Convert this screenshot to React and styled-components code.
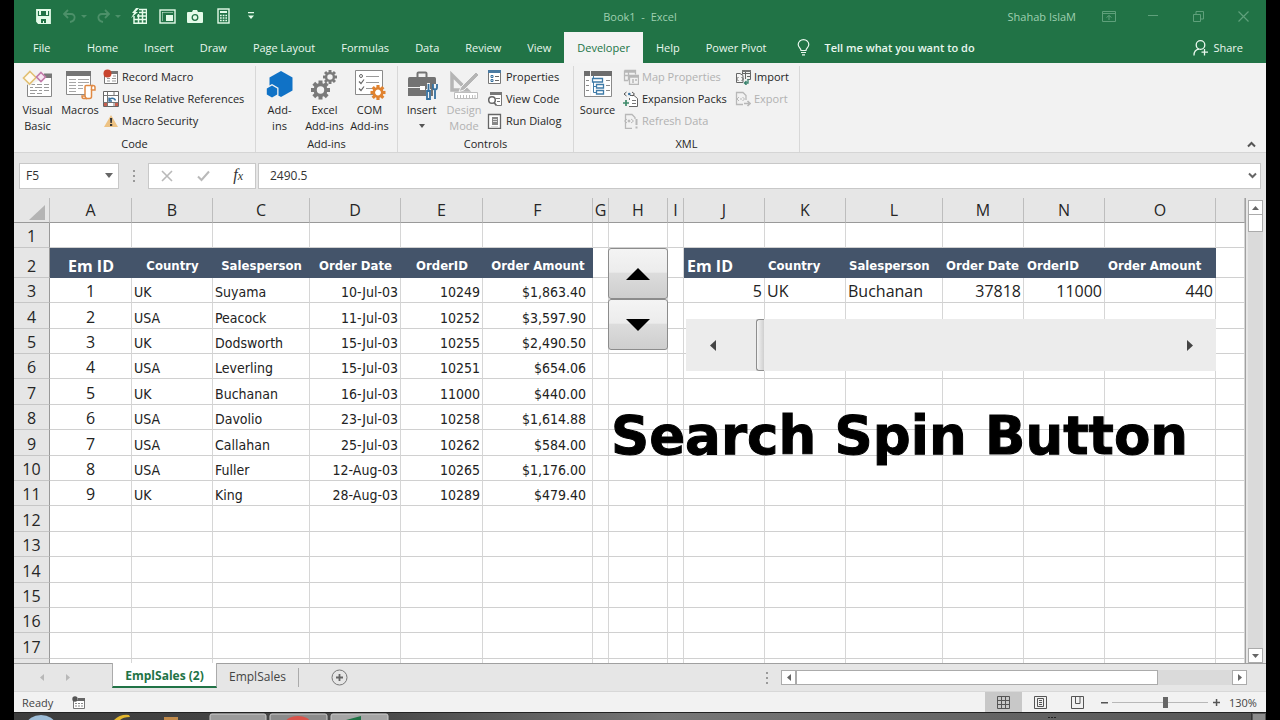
import styled, { createGlobalStyle, css } from 'styled-components';

const GlobalStyle = createGlobalStyle`
  * {
    box-sizing: border-box;
  }

  body {
    margin: 0;
    background: #000;
  }

  button {
    border: 0;
    padding: 0;
    background: none;
    font: inherit;
    color: inherit;
  }

  svg {
    display: block;
    flex: none;
  }
`;

const Window = styled.div`
  display: flex;
  flex-direction: column;
  height: 100vh;
  margin: 0 14px;
  background: #e6e6e6;
  font-family: 'Open Sans', 'Noto Sans', sans-serif;
  font-size: 11px;
  color: #262626;
  overflow: hidden;
`;

/* title bar */

const TitleBar = styled.header`
  display: grid;
  grid-template-columns: 1fr auto 1fr;
  align-items: center;
  height: 32px;
  flex: none;
  background: #217346;
  color: #9fd0b0;
`;

const QuickAccess = styled.div`
  display: flex;
  padding-left: 15px;
`;

const QuickButton = styled.button`
  display: flex;
  align-items: center;
  justify-content: center;
  gap: 4px;
  width: ${(p) => (p.$split ? 34 : 28)}px;
  height: 32px;
  color: ${(p) => (p.disabled ? '#4c9069' : '#e4fbe9')};
`;

const WindowControls = styled.div`
  display: flex;
  align-items: center;
  justify-content: flex-end;
`;

const UserName = styled.span`
  margin-right: 10px;
`;

const WindowButton = styled.button`
  display: flex;
  align-items: center;
  justify-content: center;
  width: 45px;
  height: 32px;
  color: #5fa07b;
`;

/* ribbon tabs */

const TabBar = styled.nav`
  display: flex;
  height: 31px;
  flex: none;
  background: #217346;
  color: #e9f7ee;
`;

const Tab = styled.button`
  padding: 0 13px;
  ${(p) =>
    p.$file &&
    css`
      width: 60px;
      padding: 0 0 0 19px;
      text-align: left;
    `}
  ${(p) =>
    p.$active &&
    css`
      background: #f3f3f3;
      color: #217346;
    `}
`;

const TellMe = styled.label`
  display: flex;
  align-items: center;
  gap: 14px;
  flex: 1;
  margin-left: 18px;
`;

const TellMeInput = styled.input`
  flex: 1;
  border: 0;
  padding: 0;
  outline: 0;
  background: none;
  font: inherit;
  font-weight: 600;
  color: #e9f7ee;

  &::placeholder {
    color: #e9f7ee;
    opacity: 1;
  }
`;

const ShareButton = styled.button`
  display: flex;
  align-items: center;
  gap: 4px;
  margin-right: 23px;
`;

/* ribbon */

const Ribbon = styled.section`
  position: relative;
  display: flex;
  height: 90px;
  flex: none;
  padding-top: 3px;
  background: #f2f2f2;
  border-bottom: 1px solid #d5d5d5;
`;

const Group = styled.div`
  display: flex;
  flex-direction: column;
  justify-content: space-between;
  width: ${(p) => p.$width}px;
  border-right: 1px solid #d8d8d8;
`;

const GroupBody = styled.div`
  display: flex;
  padding-left: 1px;
`;

const GroupLabel = styled.div`
  line-height: 16px;
  text-align: center;
`;

const BigButton = styled.button`
  display: flex;
  flex-direction: column;
  align-items: center;
  gap: 2px;
  width: ${(p) => (p.$narrow ? 40 : 45)}px;
  padding-top: 2px;
  line-height: 16px;
  white-space: pre;
  text-align: center;
  color: ${(p) => (p.disabled ? '#b1b1b1' : '#262626')};
`;

const DropMark = styled.span`
  display: flex;
  align-items: center;
  height: 12px;
  color: #555;
`;

const SmallColumn = styled.div`
  display: flex;
  flex-direction: column;
  margin-left: 3px;
  min-width: ${(p) => (p.$wide ? 109 : 0)}px;
`;

const SmallButton = styled.button`
  display: flex;
  align-items: center;
  gap: 3px;
  height: 22px;
  line-height: 22px;
  white-space: nowrap;
  color: ${(p) => (p.disabled ? '#b1b1b1' : '#262626')};
`;

const CollapseButton = styled.button`
  position: absolute;
  right: 10px;
  bottom: 4px;
  color: #555;
`;

/* formula bar */

const FormulaBar = styled.div`
  display: flex;
  align-items: center;
  height: 45px;
  flex: none;
  padding: 0 5px;
  color: #666;
`;

const BarBox = styled.div`
  display: flex;
  align-items: center;
  height: 26px;
  background: #fff;
  border: 1px solid #c8c8c8;
`;

const NameBox = styled(BarBox)`
  width: 100px;
  padding: 0 5px 0 6px;
`;

const Functions = styled(BarBox)`
  width: 108px;
  justify-content: space-between;
  padding: 0 12px 0 10px;
`;

const FormulaBox = styled(BarBox)`
  flex: 1;
  margin-left: 2px;
  padding: 0 3px 0 11px;
`;

const BarInput = styled.input`
  flex: 1;
  min-width: 0;
  border: 0;
  padding: 0;
  outline: 0;
  background: none;
  font: inherit;
  font-size: 12px;
  color: #333;
`;

const BarDots = styled.div`
  display: flex;
  justify-content: center;
  width: 29px;
`;

const FxButton = styled.button`
  font-family: 'Liberation Serif', serif;
  font-style: italic;
  font-size: 16px;
  line-height: 20px;
  color: #333;

  small {
    font-size: 12px;
  }
`;

/* worksheet */

const Workspace = styled.main`
  display: flex;
  flex: 1;
  min-height: 0;
  border-bottom: 1px solid #a0a0a0;
`;

const SheetArea = styled.div`
  position: relative;
  flex: 1;
  min-width: 0;
  overflow: hidden;
  border-right: 1px solid #a0a0a0;
`;

const Grid = styled.table`
  width: 100%;
  table-layout: fixed;
  border-collapse: separate;
  border-spacing: 0;
  background: #fff;

  tbody tr {
    height: 25px;
  }

  tbody tr:nth-child(5n + 4),
  tbody tr:nth-child(5n + 7) {
    height: 26px;
  }

  tbody tr:nth-child(2) {
    height: 30px;
  }
`;

const ColHead = styled.th`
  height: 25px;
  padding: 0;
  background: #e6e6e6;
  border-right: 1px solid #bdbdbd;
  border-bottom: 1px solid #999;
  font-size: 16px;
  font-weight: 400;
  line-height: 24px;
`;

const Corner = styled(ColHead)`
  svg {
    margin: 4px 4px 0 auto;
  }
`;

const RowHead = styled.th`
  padding: 0;
  background: #e6e6e6;
  border-right: 1px solid #999;
  border-bottom: 1px solid #c6c6c6;
  font-size: 16px;
  font-weight: 400;
  line-height: 22px;
  vertical-align: bottom;
`;

const Cell = styled.td`
  padding: 0 ${(p) => (p.$money ? 6 : 2)}px 0 2px;
  border-right: 1px solid #d6d6d6;
  border-bottom: 1px solid #d0d0d0;
  font-family: ${(p) => (p.$large ? "'Open Sans', sans-serif" : "'DejaVu Sans Condensed', 'DejaVu Sans', sans-serif")};
  font-size: ${(p) => (p.$large ? 16 : 14)}px;
  line-height: ${(p) => (p.$large ? 22 : 20)}px;
  text-align: ${(p) => p.$align || 'left'};
  vertical-align: bottom;
  white-space: nowrap;
  color: #222;
`;

const HeaderCell = styled(Cell)`
  padding-left: 3px;
  background: #44546a;
  border-color: #44546a;
  font-size: ${(p) => (p.$large ? 16 : 13)}px;
  font-weight: 700;
  line-height: 22px;
  color: #fff;
`;

const SpinButton = styled.div`
  position: absolute;
  left: 594px;
  top: 50px;
  width: 60px;
`;

const SpinHalf = styled.button`
  display: flex;
  align-items: center;
  justify-content: center;
  width: 100%;
  height: 51px;
  border: 1px solid #8c8c8c;
  border-radius: 3px;
  background: linear-gradient(#f4f4f4 0%, #ececec 47%, #dcdcdc 50%, #cecece 100%);
  color: #000;
`;

const ScrollControl = styled.div`
  position: absolute;
  left: 672px;
  top: 121px;
  display: flex;
  width: 530px;
  height: 52px;
  background: #ececec;
`;

const ScrollEnd = styled.button`
  display: flex;
  align-items: center;
  justify-content: center;
  width: 53px;
  color: #444;
`;

const ScrollTrack = styled.div`
  flex: 1;
  padding-left: 17px;
`;

const ScrollThumb = styled.div`
  width: 8px;
  height: 100%;
  border: 1px solid #8e8e8e;
  border-right: 0;
  border-radius: 3px 0 0 3px;
  background: linear-gradient(90deg, #f5f5f5, #cfcfcf);
`;

const Caption = styled.div`
  position: absolute;
  left: 597px;
  top: 203px;
  font-family: 'DejaVu Sans', sans-serif;
  font-size: 53px;
  font-weight: 700;
  line-height: 70px;
  white-space: nowrap;
  color: #000;
  -webkit-text-stroke: 1px #000;
`;

const SideScroll = styled.div`
  display: flex;
  flex-direction: column;
  width: 20px;
  padding: 2px 3px 0 2px;
`;

const SideTrack = styled.div`
  flex: 1;
  background: #dadada;
`;

const SideThumb = styled.div`
  height: 17px;
  background: #fff;
  border: 1px solid #ababab;
  border-top: 0;
`;

const ArrowButton = styled.button`
  display: flex;
  align-items: center;
  justify-content: center;
  width: 15px;
  height: 15px;
  background: #fff;
  border: 1px solid #ababab;
  color: #666;
`;

/* sheet tabs */

const SheetBar = styled.div`
  display: flex;
  height: 27px;
  flex: none;
  font-size: 12px;
`;

const SheetNav = styled.div`
  display: flex;
  align-items: center;
  gap: 22px;
  width: 98px;
  padding-left: 26px;
  color: #b8b8b8;
`;

const SheetTab = styled.button`
  height: 24px;
  padding: 0 12px;
  color: #444;
  ${(p) =>
    p.$active &&
    css`
      width: 105px;
      margin-top: -1px;
      height: 25px;
      padding: 2px 0 0;
      background: #fff;
      border-left: 1px solid #ababab;
      border-right: 1px solid #ababab;
      border-bottom: 2px solid #217346;
      font-weight: 700;
      color: #217346;
    `}
`;

const TabDivider = styled.div`
  width: 1px;
  height: 19px;
  margin-top: 4px;
  background: #ababab;
`;

const AddSheet = styled.button`
  margin-left: 32px;
  color: #777;
`;

const BottomScroll = styled.div`
  display: flex;
  align-items: center;
  margin-left: auto;
  width: 514px;
  padding-right: 19px;
`;

const BottomTrack = styled.div`
  flex: 1;
  display: flex;
  height: 15px;
  background: #dadada;
`;

const BottomThumb = styled.div`
  width: 83%;
  background: #fff;
  border: 1px solid #ababab;
`;

/* status bar */

const StatusBar = styled.footer`
  display: flex;
  align-items: center;
  height: 21px;
  flex: none;
  padding: 0 8px;
  background: #f2f2f2;
  border-top: 1px solid #d8d8d8;
  color: #444;
`;

const MacroButton = styled.button`
  margin: 0 auto 0 19px;
`;

const ViewButton = styled.button`
  display: flex;
  align-items: center;
  justify-content: center;
  width: 37px;
  height: 20px;
  background: ${(p) => (p.$active ? '#c8c8c8' : 'none')};
`;

const ZoomButton = styled.button`
  display: flex;
  align-items: center;
  justify-content: center;
  width: 16px;
  height: 20px;
`;

const ZoomSlider = styled.input`
  appearance: none;
  width: 96px;
  height: 16px;
  margin: 0;
  background: linear-gradient(#b8b8b8, #b8b8b8) center / 100% 1px no-repeat;

  &::-webkit-slider-thumb {
    appearance: none;
    width: 5px;
    height: 11px;
    background: #666;
  }
`;

const ZoomLabel = styled.span`
  width: 34px;
  padding-left: 5px;
`;

const Taskbar = styled.div`
  display: flex;
  justify-content: space-between;
  height: 8px;
  flex: none;
  border-top: 1px solid #222;
  background: linear-gradient(90deg, #3c3c3c 0%, #4a4a4a 30%, #777 52%, #666 75%, #555 100%);
`;

/* icons */

const Triangle = ({ dir, w = 7, h = 4 }) => {
  const points = {
    up: `0,${h} ${w / 2},0 ${w},${h}`,
    down: `0,0 ${w},0 ${w / 2},${h}`,
    left: `${w},0 0,${h / 2} ${w},${h}`,
    right: `0,0 ${w},${h / 2} 0,${h}`
  };
  return (
    <svg width={w} height={h} fill="currentColor">
      <polygon points={points[dir]} />
    </svg>
  );
};

const Dots = () => (
  <svg width="2" height="12" fill="#9a9a9a">
    <path d="M0 0h2v2H0zM0 5h2v2H0zM0 10h2v2H0z" />
  </svg>
);

const Gear = ({ cx, cy, r, color, bg = '#f2f2f2' }) => (
  <g transform={`translate(${cx} ${cy})`} stroke={color} fill="none">
    {[0, 45, 90, 135].map((a) => (
      <line key={a} y1={-r} y2={r} strokeWidth={r * 0.42} transform={`rotate(${a})`} />
    ))}
    <circle r={r * 0.56} fill={bg} strokeWidth={r * 0.34} />
  </g>
);

const SaveIcon = () => (
  <svg width="15" height="15" fill="none" stroke="currentColor">
    <path d="M1 1h13v13H2.500L1 12.500z" strokeWidth="1.800" />
    <path d="M1 7h13v7H1z" fill="currentColor" stroke="none" />
    <path d="M3 1h2v5H3zM10 1h2v5h-2z" fill="currentColor" stroke="none" />
    <path d="M5 10h5v4H8v-2H7v2H5z" fill="#217346" stroke="none" />
  </svg>
);

const UndoIcon = ({ flip }) => (
  <svg width="15" height="14" viewBox="0 0 15 14" fill="none" stroke="currentColor" strokeWidth="1.8">
    <g transform={flip ? 'translate(15 0) scale(-1 1)' : undefined}>
      <path d="M6 1L2 5l4 4M2 5h7c5 0 5 7-1 8" />
    </g>
  </svg>
);

const QuickTableIcon = () => (
  <svg width="16" height="16" fill="none" stroke="currentColor">
    <path d="M3 8v7.300h12.500V1.500H8M3.500 11.500h12M6 8h9.500M8 4.500h7.500M7.500 6v9M11.500 2v13" strokeWidth="1.500" />
    <path d="M5 0L1 5h2L0 10l7-6H4.500L8 0z" fill="currentColor" stroke="none" />
  </svg>
);

const PaneIcon = () => (
  <svg width="17" height="15" fill="none" stroke="currentColor">
    <rect x="1" y="1" width="15" height="13" strokeWidth="1.400" />
    <path d="M3 3.500h11M3.500 3v9" opacity="0.500" />
    <path d="M7 6h7v6H7z" fill="currentColor" stroke="none" />
  </svg>
);

const CameraIcon = () => (
  <svg width="16" height="13" fill="currentColor">
    <path d="M1 2h4l1-2h4l1 2h4q1 0 1 1v9q0 1-1 1H1q-1 0-1-1V3q0-1 1-1z" />
    <circle cx="8" cy="7.500" r="2.800" stroke="#217346" strokeWidth="1.300" />
  </svg>
);

const CalcIcon = () => (
  <svg width="13" height="16" fill="none" stroke="currentColor">
    <rect x="1" y="1" width="11" height="14" strokeWidth="1.400" />
    <rect x="3" y="3" width="7" height="2" fill="currentColor" stroke="none" />
    <path d="M3 7.500h7M3 10h7M3 12.500h7" strokeWidth="1.700" strokeDasharray="1.700 1" />
  </svg>
);

const MoreIcon = () => (
  <svg width="8" height="8" fill="currentColor">
    <path d="M1 0h6v1.300H1zM1 3.500h6L4 7z" />
  </svg>
);

const BulbIcon = () => (
  <svg width="13" height="17" fill="none" stroke="currentColor" strokeWidth="1.200">
    <path d="M4 11.500C4 9 1.200 8.500 1.200 5.500a5.300 4.800 0 0110.600 0C11.800 8.500 9 9 9 11.500zM4 13.500h5M5 15.800h3" />
  </svg>
);

const ShareIcon = () => (
  <svg width="16" height="16" fill="none" stroke="currentColor" strokeWidth="1.300">
    <circle cx="7.500" cy="5" r="4.300" />
    <path d="M1 15.500c0-4 2-6 5-6.300M11.500 9v6.500M8.500 12.200h6.500" />
  </svg>
);

const RibbonOptionsIcon = () => (
  <svg width="14" height="11" fill="none" stroke="currentColor">
    <path d="M.5.5h13v10H.5zM.5 2.500h13M7 9V4.500M4.500 6.500L7 4.500l2.500 2" />
  </svg>
);

const MinimizeIcon = () => (
  <svg width="11" height="2" fill="currentColor">
    <path d="M0 0h10v1H0z" />
  </svg>
);

const RestoreIcon = () => (
  <svg width="11" height="11" fill="none" stroke="currentColor">
    <path d="M.5 3.500h7v7h-7zM3 3.500v-3h7.500V8H8" />
  </svg>
);

const CloseIcon = () => (
  <svg width="11" height="11" fill="none" stroke="currentColor" strokeWidth="1.200">
    <path d="M.5.5l10 10M10.500.5l-10 10" />
  </svg>
);

const VisualBasicIcon = () => (
  <svg width="32" height="32" fill="none">
    <path d="M5.500 6.500h24v22h-24z" fill="#fff" stroke="#888" />
    <path d="M22 5.500h8V10h-8z" fill="#777" />
    <path d="M8 16.500h5M15 16.500h5M22 16.500h5M8 19.500h3M13 19.500h7M22 19.500h5M8 22.500h7M17 22.500h3M22 22.500h5M8 25.500h5M15 25.500h5" stroke="#9a9a9a" />
    <path d="M0 2h22v8l-8 4-7 4-7-6z" fill="#f2f2f2" />
    <path d="M8 3.500l6 6-6.500 6.500-6-6z" fill="#fffaf0" stroke="#e2c073" strokeWidth="1.600" />
    <path d="M19 4.500l4.500 4.500-4.500 4.500-4.500-4.500z" fill="#f7e6f2" stroke="#c27aa9" strokeWidth="1.600" />
  </svg>
);

const MacrosIcon = () => (
  <svg width="32" height="32" fill="none">
    <path d="M2.500 4.500h24v22h-24z" fill="#fff" stroke="#8a8a8a" />
    <path d="M2 3h25v5H2z" fill="#757575" />
    <path d="M5 11.500h7M14 11.500h11M5 14.500h7M14 14.500h11M5 17.500h7M14 17.500h5M5 20.500h7M14 20.500h5M5 23.500h7" stroke="#a6a6a6" />
    <path d="M22 17.500h7q2 0 2 2v2.500h-3.500v6.500q0 2-2 2h-6q-1.500 0-1.500-2.500h3V19q0-1.500 1-1.500z" fill="#fff" stroke="#e08a45" strokeWidth="1.500" />
    <path d="M21 28q.5 2.500 2 2.500M27.500 22v-2.500q0-2 1.500-2" stroke="#e08a45" strokeWidth="1.500" />
  </svg>
);

const AddinsIcon = () => (
  <svg width="32" height="32">
    <path d="M17 3l11.500 6.500v13L17 29 5.500 22.500v-13z" fill="#1072c6" />
    <path d="M8 16l6.500 3.700v7.500L8 31l-6.500-3.800v-7.500z" fill="#f2f2f2" />
    <path d="M8 17.500l5.200 3v6L8 29.500l-5.200-3v-6z" fill="#1072c6" />
  </svg>
);

const ExcelAddinsIcon = () => (
  <svg width="32" height="32">
    <Gear cx={11.5} cy={22} r={9.5} color="#7a7a7a" />
    <Gear cx={21} cy={9} r={7} color="#7a7a7a" />
  </svg>
);

const ComAddinsIcon = () => (
  <svg width="32" height="32" fill="none">
    <path d="M1.500 2.500h27v24h-27z" fill="#fff" stroke="#8a8a8a" />
    <path d="M12 8.500h13M12 14.500h13M12 20.500h7" stroke="#9a9a9a" />
    <path d="M5 13.500l2 2 3-4M5 20.500l2 2 3-4" stroke="#666" strokeWidth="1.200" />
    <circle cx="7" cy="8" r="1.500" stroke="#666" />
    <Gear cx={24} cy={24.5} r={7.5} color="#e0822f" bg="#fff" />
  </svg>
);

const InsertIcon = () => (
  <svg width="32" height="32" fill="none">
    <path d="M11.500 9V5.500q0-1 1-1h7q1 0 1 1V9" stroke="#737373" strokeWidth="2" />
    <path d="M2 10.500q0-1.500 1.500-1.500h25q1.500 0 1.500 1.500V28H2z" fill="#737373" />
    <path d="M2 19.500h12" stroke="#f2f2f2" />
    <path d="M14 18h5v4h-5z" fill="#fff" />
    <path d="M21 15h3v6h-3zM20 21h5v11h-5zM27 16h6v16h-6z" fill="#f2f2f2" />
    <path d="M22.500 16v6M21 23h3v8h-3zM27 16v3.500q0 2 2 2t2-2V16M29 21v10" stroke="#36719f" strokeWidth="1.800" />
  </svg>
);

const DesignIcon = () => (
  <svg width="32" height="32" fill="none">
    <path d="M4 7v15h15z" stroke="#b5b5b5" strokeWidth="3.500" />
    <path d="M28 4l3 3-15 15-5 1.500L13 19z" fill="#b5b5b5" stroke="#f2f2f2" />
    <path d="M6.500 24.500h23v6h-23z" fill="#fff" stroke="#bdbdbd" />
    <path d="M9.500 27v3M12.500 27v3M15.500 27v3M18.500 27v3M21.500 27v3M24.500 27v3M27 27v3" stroke="#bdbdbd" />
  </svg>
);

const SourceIcon = () => (
  <svg width="32" height="32" fill="none">
    <path d="M2.500 4.500h27v24h-27z" fill="#fff" stroke="#8a8a8a" />
    <path d="M2 3h28v5H2z" fill="#6d6d6d" />
    <path d="M8.500 3v25" stroke="#f2f2f2" />
    <path d="M4 12.500h3M4 17.500h3M4 22.500h3M24 12.500h4M24 17.500h4M24 22.500h4" stroke="#888" />
    <path d="M11.500 8v16.500h3M11.500 18.500h3" stroke="#3f7ba8" />
    <path d="M10.500 10.500h10v3.500h-10zM14.500 16.500h7v3.500h-7zM14.500 22.500h7V26h-7z" fill="#fff" stroke="#3f7ba8" strokeWidth="1.300" />
  </svg>
);

const RecordIcon = () => (
  <svg width="16" height="16" fill="none">
    <path d="M1.500 3.500h13v11h-13z" fill="#fff" stroke="#777" />
    <path d="M8 2h7v3H8z" fill="#777" />
    <path d="M4 9.500h3M9 9.500h4M4 12h3M9 12h4M10 7h3" stroke="#999" />
    <circle cx="4.500" cy="4.500" r="4" fill="#c8452f" />
  </svg>
);

const RelativeIcon = () => (
  <svg width="16" height="16" fill="none">
    <path d="M.5.5h15v15H.5z" fill="#fff" stroke="#666" />
    <path d="M.5 4.500h15M.5 11.500h15M4.500.5v15M11 .5v4M11 11.500v4" stroke="#777" />
    <path d="M1 12h3v3H1zM12 12h3v3h-3z" fill="#c7604f" />
    <path d="M6.500 9.500c0-3 5-3 6 0M6 6.500v3.500h3" stroke="#36719f" strokeWidth="1.400" />
  </svg>
);

const SecurityIcon = () => (
  <svg width="16" height="16">
    <path d="M8 2l7 12H1z" fill="#edc283" />
    <path d="M7 5h2.200l-.4 5H7.400zM7 11h2.200v2H7z" fill="#333" />
  </svg>
);

const PropertiesIcon = () => (
  <svg width="16" height="16" fill="none">
    <path d="M1.500 1.500h12v13h-12z" fill="#fff" stroke="#777" />
    <path d="M1 1h13v3H1z" fill="#4a7ba3" />
    <path d="M4 6.500h2v2H4zM4 10.500h2v2H4z" stroke="#36719f" />
    <path d="M8 7.500h4M8 11.500h4" stroke="#666" />
  </svg>
);

const ViewCodeIcon = () => (
  <svg width="16" height="16" fill="none">
    <path d="M3.500 1.500h11v13h-5" fill="#fff" stroke="#777" />
    <path d="M3 1h12v3H3z" fill="#777" />
    <path d="M9 7.500h4M10 10.500h3" stroke="#777" />
    <circle cx="5" cy="9" r="3.300" fill="#fff" stroke="#666" strokeWidth="1.500" />
    <path d="M7 11.500l2.500 3" stroke="#666" strokeWidth="1.700" />
  </svg>
);

const RunDialogIcon = () => (
  <svg width="16" height="16" fill="none">
    <path d="M1.500 1.500h12v14h-12z" fill="#fff" stroke="#666" strokeWidth="1.300" />
    <path d="M5 4h6v8H5z" fill="#888" />
    <path d="M6 6.500h4M6 8.500h4M4 13.500h7" stroke="#ddd" />
  </svg>
);

const MapPropsIcon = () => (
  <svg width="16" height="16" fill="none" stroke="#b8b8b8">
    <path d="M1.500 1.500h11v4M1.500 1.500v10h4M1 3h12M1.500 6.500h5M5.500 3v8" strokeWidth="1.300" />
    <path d="M6.500 6.500h9v9h-9zM6.500 8h9M9 11h2M9 13h2M12 11h2" strokeWidth="1.300" fill="#f2f2f2" />
  </svg>
);

const ExpansionIcon = () => (
  <svg width="16" height="16" fill="none">
    <path d="M7 4.500h4l3.500 3v8H6M6.500 9V7" fill="#fff" stroke="#666" />
    <path d="M9 9.500h4M9 12.500h4" stroke="#777" />
    <path d="M3.500 1L1 3l2.500 2M9 1l2.500 2L9 5" stroke="#555" />
    <circle cx="6.300" cy="3" r="1.300" fill="#36719f" />
    <path d="M3 9v6M0 12h6" stroke="#3f8a6a" strokeWidth="1.700" />
  </svg>
);

const RefreshIcon = () => (
  <svg width="16" height="16" fill="none" stroke="#b8b8b8">
    <path d="M9 15.500H2.500V1.500H9l3 3V6" strokeWidth="1.300" />
    <path d="M4 6L1.500 8 4 10M8 6l2.500 2L8 10" />
    <circle cx="6" cy="8" r="1" fill="#b8b8b8" />
    <path d="M13.500 6v6M13.500 13.500v2" strokeWidth="2" />
  </svg>
);

const ImportIcon = () => (
  <svg width="16" height="16" fill="none" stroke="#666">
    <path d="M7.500 1.500h8v9h-3M7.500 1.500v4M7 4.500h9M10.500 2v8M12 7.500h4" />
    <path d="M7 1h9v2H7z" fill="#777" stroke="none" />
    <path d="M1.500 13.500v-9H5l3 2v7z" fill="#f6f6f6" />
    <path d="M3.500 8L1.500 10l2 2M6.500 8l2 2-2 2" />
    <path d="M13 10v4H9.500M11.500 12l-2 2 2 2" stroke="#36806a" strokeWidth="1.300" />
  </svg>
);

const ExportIcon = () => (
  <svg width="16" height="16" fill="none" stroke="#b8b8b8">
    <path d="M8 13.500H1.500v-12H8l3 3V9" strokeWidth="1.300" />
    <path d="M4 6L2 8l2 2M7.500 6l2 2-2 2M5 8h2" />
    <path d="M9 12.500h6M12.500 10l2.500 2.500-2.500 2.500" strokeWidth="1.600" />
  </svg>
);

const ChevronIcon = ({ up }) => (
  <svg width="9" height="7" fill="none" stroke="currentColor" strokeWidth="2">
    <path d={up ? 'M1 5.500l3.500-3.500L8 5.500' : 'M1 1.500L4.500 5 8 1.500'} />
  </svg>
);

const CancelIcon = () => (
  <svg width="15" height="12" fill="none" stroke="#b9b9b9" strokeWidth="1.600">
    <path d="M3 1l10 10M13 1L3 11" />
  </svg>
);

const CheckIcon = () => (
  <svg width="13" height="12" fill="none" stroke="#b9b9b9" strokeWidth="2">
    <path d="M1 6.500L4.500 10 12 1.500" />
  </svg>
);

const MacroStatusIcon = () => (
  <svg width="13" height="13" fill="none">
    <path d="M1.500 4.500h11v8h-11z" fill="#fff" stroke="#777" />
    <path d="M6 2h7v3H6z" fill="#666" />
    <path d="M3 7.500h8M3 10h8" stroke="#888" strokeDasharray="2 1" />
    <circle cx="3" cy="3" r="2.700" fill="#555" />
  </svg>
);

const NormalViewIcon = () => (
  <svg width="13" height="13" fill="none" stroke="#555">
    <path d="M.5.5h12v12H.5zM.5 4.500h12M.5 8.500h12M4.500.5v12M8.500.5v12" />
  </svg>
);

const PageViewIcon = () => (
  <svg width="13" height="13" fill="none" stroke="#555">
    <path d="M.5.5h12v12H.5zM3.500 2.500h6v8h-6zM5 4.500h3M5 6.500h3M5 8.500h3" />
  </svg>
);

const BreakViewIcon = () => (
  <svg width="13" height="13" fill="none" stroke="#555">
    <path d="M.5.5h12v12H.5zM4.500.5v7H9V.5" />
  </svg>
);

const AddSheetIcon = () => (
  <svg width="17" height="17" fill="none" stroke="currentColor">
    <circle cx="8.500" cy="8.500" r="7.500" />
    <path d="M8.500 5v7M5 8.500h7" strokeWidth="1.800" stroke="#666" />
  </svg>
);

const TaskbarLeft = () => (
  <svg width="400" height="7">
    <ellipse cx="27" cy="11" rx="14" ry="9" fill="#9dbdd8" />
    <path d="M100 7q6-6 15-5l1 2q-7 0-10 3z" fill="#e3b72e" />
    <path d="M150 4h14v3h-14z" fill="#c08a4a" />
    <rect x="196" y="1" width="56" height="8" rx="2" fill="#9b9b9b" stroke="#ccc" />
    <rect x="256" y="1" width="57" height="8" rx="2" fill="#8b8b8b" stroke="#ccc" />
    <ellipse cx="284" cy="9" rx="12" ry="6" fill="#d9534a" />
    <rect x="317" y="1" width="57" height="8" rx="2" fill="#a5a5a5" stroke="#ccc" />
    <path d="M332 7l15-4v4z" fill="#1f7346" />
  </svg>
);

const TaskbarRight = () => (
  <svg width="230" height="7">
    <path d="M12 4h2v1h-2zM15 4h2v1h-2zM18 4h2v1h-2z" fill="#222" />
    <path d="M215.500 0v7" stroke="#333" />
    <path d="M217 1h12v6h-12z" fill="#8c8c8c" />
  </svg>
);

/* data */

const tabs = ['File', 'Home', 'Insert', 'Draw', 'Page Layout', 'Formulas', 'Data', 'Review', 'View', 'Developer', 'Help', 'Power Pivot'];

const columns = [
  ['A', 82], ['B', 81], ['C', 97], ['D', 91], ['E', 82], ['F', 110], ['G', 16], ['H', 59],
  ['I', 16], ['J', 81], ['K', 81], ['L', 97], ['M', 81], ['N', 81], ['O', 111]
];

const headings = ['Em ID', 'Country', 'Salesperson', 'Order Date', 'OrderID', 'Order Amount'];

const orders = [
  [1, 'UK', 'Suyama', '10-Jul-03', '10249', '$1,863.40'],
  [2, 'USA', 'Peacock', '11-Jul-03', '10252', '$3,597.90'],
  [3, 'UK', 'Dodsworth', '15-Jul-03', '10255', '$2,490.50'],
  [4, 'USA', 'Leverling', '15-Jul-03', '10251', '$654.06'],
  [5, 'UK', 'Buchanan', '16-Jul-03', '11000', '$440.00'],
  [6, 'USA', 'Davolio', '23-Jul-03', '10258', '$1,614.88'],
  [7, 'USA', 'Callahan', '25-Jul-03', '10262', '$584.00'],
  [8, 'USA', 'Fuller', '12-Aug-03', '10265', '$1,176.00'],
  [9, 'UK', 'King', '28-Aug-03', '10289', '$479.40']
];

const found = ['5', 'UK', 'Buchanan', '37818', '11000', '440'];

const rowNumbers = Array.from({ length: 17 }, (_, i) => i + 1);

const orderAlign = ['center', 'left', 'left', 'right', 'right', 'right'];
const foundAlign = ['right', 'left', 'left', 'right', 'right', 'right'];

function renderCell(row, col) {
  const key = `${row}-${col}`;
  const isLeft = col < 6;
  const isRight = col >= 9 && col < 15;
  const field = isLeft ? col : col - 9;

  if (row === 2 && (isLeft || isRight)) {
    return (
      <HeaderCell key={key} $large={field === 0} $align={isLeft ? 'center' : 'left'}>
        {headings[field]}
      </HeaderCell>
    );
  }
  if (isLeft && orders[row - 3]) {
    return (
      <Cell key={key} $large={col === 0} $align={orderAlign[col]} $money={col === 5}>
        {orders[row - 3][col]}
      </Cell>
    );
  }
  if (isRight && row === 3) {
    return (
      <Cell key={key} $large $align={foundAlign[field]}>
        {found[field]}
      </Cell>
    );
  }
  return <Cell key={key} />;
}

function Sheet() {
  return (
    <SheetArea>
      <Grid>
        <colgroup>
          <col width="36" />
          {columns.map(([name, width]) => (
            <col key={name} width={width} />
          ))}
          <col />
        </colgroup>
        <thead>
          <tr>
            <Corner aria-label="Select all">
              <svg width="16" height="15">
                <path d="M16 0v15H0z" fill="#b4b4b4" />
              </svg>
            </Corner>
            {columns.map(([name]) => (
              <ColHead key={name}>{name}</ColHead>
            ))}
            <ColHead />
          </tr>
        </thead>
        <tbody>
          {rowNumbers.map((row) => (
            <tr key={row}>
              <RowHead>{row}</RowHead>
              {[...columns, null].map((_, col) => renderCell(row, col))}
            </tr>
          ))}
          {/* top edge of the next row, cut by the sheet tabs */}
          <tr>
            <RowHead />
            {[...columns, null].map((_, col) => renderCell(18, col))}
          </tr>
        </tbody>
      </Grid>
      <SpinButton>
        <SpinHalf aria-label="Previous record">
          <Triangle dir="up" w={24} h={12} />
        </SpinHalf>
        <SpinHalf aria-label="Next record">
          <Triangle dir="down" w={24} h={12} />
        </SpinHalf>
      </SpinButton>
      <ScrollControl>
        <ScrollEnd aria-label="Scroll back">
          <Triangle dir="left" w={6} h={11} />
        </ScrollEnd>
        <ScrollTrack>
          <ScrollThumb />
        </ScrollTrack>
        <ScrollEnd aria-label="Scroll forward">
          <Triangle dir="right" w={6} h={11} />
        </ScrollEnd>
      </ScrollControl>
      <Caption>Search Spin Button</Caption>
    </SheetArea>
  );
}

export default function App() {
  return (
    <>
      <GlobalStyle />
      <Window>
        <TitleBar>
          <QuickAccess>
            <QuickButton aria-label="Save"><SaveIcon /></QuickButton>
            <QuickButton aria-label="Undo" $split disabled><UndoIcon /><Triangle dir="down" w={6} h={3} /></QuickButton>
            <QuickButton aria-label="Redo" $split disabled><UndoIcon flip /><Triangle dir="down" w={6} h={3} /></QuickButton>
            <QuickButton aria-label="Quick table"><QuickTableIcon /></QuickButton>
            <QuickButton aria-label="Form"><PaneIcon /></QuickButton>
            <QuickButton aria-label="Camera"><CameraIcon /></QuickButton>
            <QuickButton aria-label="Calculator"><CalcIcon /></QuickButton>
            <QuickButton aria-label="Customize"><MoreIcon /></QuickButton>
          </QuickAccess>
          <span>Book1&nbsp; -&nbsp; Excel</span>
          <WindowControls>
            <UserName>Shahab IslaM</UserName>
            <WindowButton aria-label="Ribbon display options"><RibbonOptionsIcon /></WindowButton>
            <WindowButton aria-label="Minimize"><MinimizeIcon /></WindowButton>
            <WindowButton aria-label="Restore"><RestoreIcon /></WindowButton>
            <WindowButton aria-label="Close"><CloseIcon /></WindowButton>
          </WindowControls>
        </TitleBar>

        <TabBar>
          {tabs.map((tab) => (
            <Tab key={tab} $file={tab === 'File'} $active={tab === 'Developer'}>
              {tab}
            </Tab>
          ))}
          <TellMe>
            <BulbIcon />
            <TellMeInput aria-label="Tell me" placeholder="Tell me what you want to do" />
          </TellMe>
          <ShareButton><ShareIcon />Share</ShareButton>
        </TabBar>

        <Ribbon>
          <Group $width={242}>
            <GroupBody>
              <BigButton><VisualBasicIcon />{'Visual\nBasic'}</BigButton>
              <BigButton $narrow><MacrosIcon />Macros</BigButton>
              <SmallColumn>
                <SmallButton><RecordIcon />Record Macro</SmallButton>
                <SmallButton><RelativeIcon />Use Relative References</SmallButton>
                <SmallButton><SecurityIcon />Macro Security</SmallButton>
              </SmallColumn>
            </GroupBody>
            <GroupLabel>Code</GroupLabel>
          </Group>
          <Group $width={142}>
            <GroupBody>
              <BigButton><AddinsIcon />{'Add-\nins'}</BigButton>
              <BigButton><ExcelAddinsIcon />{'Excel\nAdd-ins'}</BigButton>
              <BigButton><ComAddinsIcon />{'COM\nAdd-ins'}</BigButton>
            </GroupBody>
            <GroupLabel>Add-ins</GroupLabel>
          </Group>
          <Group $width={176}>
            <GroupBody>
              <BigButton><InsertIcon />Insert<DropMark><Triangle dir="down" w={6} /></DropMark></BigButton>
              <BigButton $narrow disabled><DesignIcon />{'Design\nMode'}</BigButton>
              <SmallColumn>
                <SmallButton><PropertiesIcon />Properties</SmallButton>
                <SmallButton><ViewCodeIcon />View Code</SmallButton>
                <SmallButton><RunDialogIcon />Run Dialog</SmallButton>
              </SmallColumn>
            </GroupBody>
            <GroupLabel>Controls</GroupLabel>
          </Group>
          <Group $width={226}>
            <GroupBody>
              <BigButton><SourceIcon />Source</BigButton>
              <SmallColumn $wide>
                <SmallButton disabled><MapPropsIcon />Map Properties</SmallButton>
                <SmallButton><ExpansionIcon />Expansion Packs</SmallButton>
                <SmallButton disabled><RefreshIcon />Refresh Data</SmallButton>
              </SmallColumn>
              <SmallColumn>
                <SmallButton><ImportIcon />Import</SmallButton>
                <SmallButton disabled><ExportIcon />Export</SmallButton>
              </SmallColumn>
            </GroupBody>
            <GroupLabel>XML</GroupLabel>
          </Group>
          <CollapseButton aria-label="Collapse ribbon"><ChevronIcon up /></CollapseButton>
        </Ribbon>

        <FormulaBar>
          <NameBox>
            <BarInput aria-label="Name box" defaultValue="F5" />
            <Triangle dir="down" w={8} h={5} />
          </NameBox>
          <BarDots><Dots /></BarDots>
          <Functions>
            <button aria-label="Cancel"><CancelIcon /></button>
            <button aria-label="Enter"><CheckIcon /></button>
            <FxButton>f<small>x</small></FxButton>
          </Functions>
          <FormulaBox>
            <BarInput aria-label="Formula" defaultValue="2490.5" />
            <ChevronIcon />
          </FormulaBox>
        </FormulaBar>

        <Workspace>
          <Sheet />
          <SideScroll>
            <ArrowButton aria-label="Scroll up"><Triangle dir="up" /></ArrowButton>
            <SideTrack><SideThumb /></SideTrack>
            <ArrowButton aria-label="Scroll down"><Triangle dir="down" /></ArrowButton>
          </SideScroll>
        </Workspace>

        <SheetBar>
          <SheetNav>
            <Triangle dir="left" w={4} h={7} />
            <Triangle dir="right" w={4} h={7} />
          </SheetNav>
          <SheetTab $active>EmplSales (2)</SheetTab>
          <SheetTab>EmplSales</SheetTab>
          <TabDivider />
          <AddSheet aria-label="New sheet"><AddSheetIcon /></AddSheet>
          <BottomScroll>
            <BarDots><Dots /></BarDots>
            <ArrowButton aria-label="Scroll left"><Triangle dir="left" w={4} h={7} /></ArrowButton>
            <BottomTrack><BottomThumb /></BottomTrack>
            <ArrowButton aria-label="Scroll right"><Triangle dir="right" w={4} h={7} /></ArrowButton>
          </BottomScroll>
        </SheetBar>

        <StatusBar>
          Ready
          <MacroButton aria-label="Macro recording"><MacroStatusIcon /></MacroButton>
          <ViewButton aria-label="Normal" $active><NormalViewIcon /></ViewButton>
          <ViewButton aria-label="Page layout"><PageViewIcon /></ViewButton>
          <ViewButton aria-label="Page break preview"><BreakViewIcon /></ViewButton>
          <ZoomButton aria-label="Zoom out">
            <svg width="7" height="7"><path d="M0 3h7v1.500H0z" fill="#555" /></svg>
          </ZoomButton>
          <ZoomSlider type="range" aria-label="Zoom" min="0" max="100" defaultValue="56" />
          <ZoomButton aria-label="Zoom in">
            <svg width="7" height="7"><path d="M0 2.800h7v1.500H0zM2.800 0h1.500v7H2.800z" fill="#555" /></svg>
          </ZoomButton>
          <ZoomLabel>130%</ZoomLabel>
        </StatusBar>
        <Taskbar>
          <TaskbarLeft />
          <TaskbarRight />
        </Taskbar>
      </Window>
    </>
  );
}
